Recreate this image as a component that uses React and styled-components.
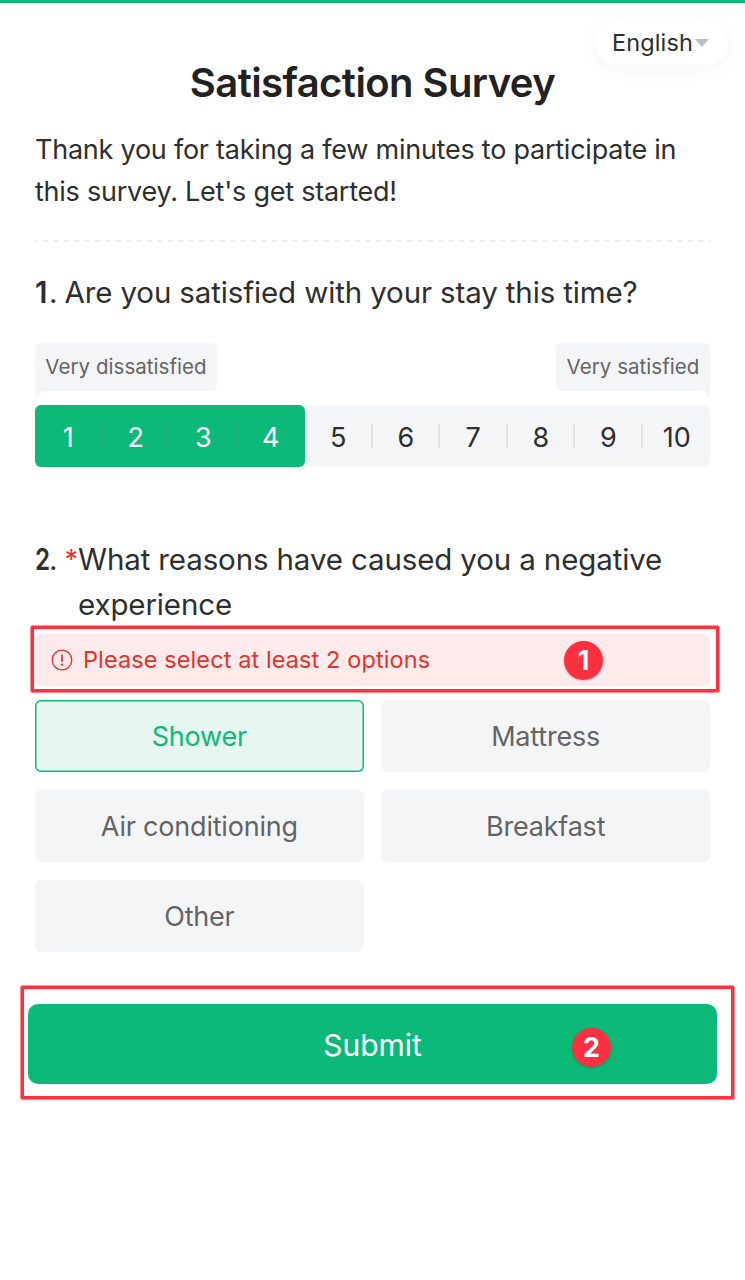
import { useState } from 'react';
import styled, { createGlobalStyle, css } from 'styled-components';

const Color = {
  GREEN: '#0db978',
  GREEN_LIGHT: '#e6f6f0',
  GRAY_LIGHT: '#f4f5f7',
  GRAY_LINE: '#dfe1e3',
  TEXT: '#2e2e2e',
  TEXT_MUTED: '#646464',
  RED: '#e5322d',
  RED_LIGHT: '#fdeaea',
  MARK: '#fb3040'
};

const GlobalStyle = createGlobalStyle`
  *,
  *::before,
  *::after {
    box-sizing: border-box;
  }

  body {
    margin: 0;
    background-color: #ffffff;
    color: ${Color.TEXT};
    font-family: Inter, 'Liberation Sans', sans-serif;
    font-weight: 370;
  }

  button {
    padding: 0;
    border: none;
    font: inherit;
    cursor: pointer;
  }
`;

const Page = styled.div`
  position: relative;
  min-height: 1280px;
  padding: 58px 35px 0;
  border-top: 3px solid ${Color.GREEN};
`;

const Language = styled.button`
  position: absolute;
  top: 17px;
  right: 17px;
  display: flex;
  align-items: center;
  justify-content: center;
  gap: 2px;
  width: 133px;
  height: 45px;
  padding-right: 2px;
  border-radius: 23px;
  background-color: #ffffff;
  box-shadow: 0 4px 18px rgba(0, 30, 20, 0.05);
  color: ${Color.TEXT};
  font-size: 23.5px;
  letter-spacing: 0.1px;
`;

const Caret = styled.span`
  border: 7px solid transparent;
  border-top: 8px solid #b3c2cd;
  border-bottom: none;
`;

const Title = styled.h1`
  margin: 0;
  color: #222222;
  font-size: 40px;
  font-weight: 600;
  line-height: 44px;
  letter-spacing: -0.58px;
  text-align: center;
`;

const Intro = styled.p`
  margin: 24px 0 0;
  font-size: 27px;
  line-height: 41.5px;
  letter-spacing: -0.24px;
  white-space: nowrap;
`;

const Divider = styled.svg`
  display: block;
  width: 676px;
  height: 2px;
  margin-top: 28px;
`;

const Question = styled.h2`
  display: flex;
  margin: ${({ $top }) => $top}px 0 0;
  font-size: 29.5px;
  font-weight: inherit;
  line-height: 45px;
  letter-spacing: -0.13px;
  white-space: nowrap;
`;

const Num = styled.span`
  width: 29.5px;
  flex: none;

  b {
    display: inline-block;
    width: 14px;
    font-weight: 600;
    transform: scaleX(${({ $condense = 1 }) => $condense});
    transform-origin: left;
  }
`;

const Required = styled.span`
  width: 13.5px;
  flex: none;
  color: ${Color.RED};
  font-size: 27px;
`;

const Hints = styled.div`
  display: flex;
  justify-content: space-between;
  margin-top: 28px;
`;

const Hint = styled.span`
  position: relative;
  display: flex;
  align-items: center;
  justify-content: center;
  width: ${({ $width }) => $width}px;
  height: 48px;
  border-radius: 6px;
  background-color: ${Color.GRAY_LIGHT};
  color: ${Color.TEXT_MUTED};
  font-size: 20.5px;
  letter-spacing: 0.05px;
  line-height: 24px;
  white-space: nowrap;

  &::after {
    content: '';
    position: absolute;
    top: 44px;
    ${({ $side }) => $side}: 0;
    width: 12px;
    height: 12px;
    background-color: ${Color.GRAY_LIGHT};
    clip-path: ${({ $side }) =>
      $side === 'left' ? 'polygon(0 0, 100% 0, 0 100%)' : 'polygon(0 0, 100% 0, 100% 100%)'};
  }
`;

const Scale = styled.div`
  display: grid;
  grid-template-columns: repeat(10, 1fr);
  height: 62px;
  margin-top: 14px;
  border-radius: 6px;
  background-color: ${Color.GRAY_LIGHT};
`;

const Score = styled.button`
  display: flex;
  align-items: center;
  background-color: transparent;
  color: ${Color.TEXT};
  font-size: 27px;

  span {
    flex: 1;
    height: 24px;
    padding-left: 1px;
    line-height: 27px;
  }

  &:not(:last-child) span {
    border-right: 2px solid ${Color.GRAY_LINE};
  }

  ${({ $active }) =>
    $active &&
    css`
      background-color: ${Color.GREEN};
      color: #ffffff;

      &:not(:last-child) span {
        border-right-color: #2ba97b;
      }
    `}

  ${({ $last }) =>
    $last &&
    css`
      border-radius: 0 6px 6px 0;

      &:not(:last-child) span {
        border-right-color: transparent;
      }
    `}

  &:first-child {
    border-radius: 6px 0 0 6px;
  }
`;

const Frame = styled.div`
  position: relative;
  border: 3px solid ${Color.MARK};
  border-radius: 1px;
  box-shadow: 0 0 0 0.5px ${Color.MARK}, 0 1px 3px rgba(0, 0, 0, 0.16),
    inset 0 1px 3px rgba(0, 0, 0, 0.1);
`;

const AlertFrame = styled(Frame)`
  height: 66px;
  margin: -1px -9px 0 -4px;
  padding: 5px 6px 0 1px;
`;

const Alert = styled.div`
  display: flex;
  align-items: center;
  gap: 10px;
  height: 52px;
  padding-left: 16px;
  border-radius: 6px;
  background-color: ${Color.RED_LIGHT};
  color: ${Color.RED};
  font-size: 23.5px;
  letter-spacing: 0.1px;
  white-space: nowrap;
`;

const SubmitFrame = styled(Frame)`
  height: 113px;
  margin: 34px -24px 0 -14px;
  padding: 15px 14px 0 4px;
`;

const Marker = styled.span`
  position: absolute;
  top: ${({ $top }) => $top}px;
  left: ${({ $left }) => $left}px;
  display: flex;
  align-items: center;
  justify-content: center;
  width: 39px;
  height: 39px;
  border-radius: 50%;
  background-color: ${Color.MARK};
  box-shadow: 0 1px 3px rgba(0, 0, 0, 0.2);
  color: #ffffff;
  font-size: 27px;
  font-weight: 700;
  line-height: 1;
`;

const Options = styled.div`
  display: grid;
  grid-template-columns: 1fr 1fr;
  grid-auto-rows: 72.5px;
  gap: 17.5px;
  margin-top: 8px;
`;

const Option = styled.button`
  padding-top: 2px;
  border-radius: 6px;
  background-color: ${Color.GRAY_LIGHT};
  color: ${Color.TEXT_MUTED};
  font-size: 27px;
  letter-spacing: -0.2px;

  ${({ $selected }) =>
    $selected &&
    css`
      background-color: ${Color.GREEN_LIGHT};
      box-shadow: inset 0 0 0 1.5px ${Color.GREEN};
      color: ${Color.GREEN};
    `}
`;

const Submit = styled.button`
  display: block;
  width: 100%;
  height: 80px;
  padding-top: 2px;
  border-radius: 10px;
  background-color: ${Color.GREEN};
  color: #ffffff;
  font-size: 30px;
`;

const scores = [1, 2, 3, 4, 5, 6, 7, 8, 9, 10];
const reasons = ['Shower', 'Mattress', 'Air conditioning', 'Breakfast', 'Other'];

function WarningIcon() {
  return (
    <svg width='22' height='22' viewBox='0 0 22 22' fill='none' stroke='currentColor'>
      <circle cx='11' cy='11' r='9.8' strokeWidth='1.3' />
      <path d='M11 5.5v7.2' strokeWidth='1.7' />
      <circle cx='11' cy='15.6' r='1.2' fill='currentColor' stroke='none' />
    </svg>
  );
}

function App() {
  const [score, setScore] = useState(4);
  const [selected, setSelected] = useState(['Shower']);

  const toggle = (reason) =>
    setSelected((prev) =>
      prev.includes(reason) ? prev.filter((item) => item !== reason) : [...prev, reason]
    );

  return (
    <>
      <GlobalStyle />
      <Page>
        <Language>
          English
          <Caret />
        </Language>
        <Title>Satisfaction Survey</Title>
        <Intro>
          Thank you for taking a few minutes to participate in
          <br />
          this survey. Let's get started!
        </Intro>
        <Divider>
          <line x1='0' y1='1' x2='676' y2='1' stroke='#ececec' strokeWidth='2' strokeDasharray='5.2 5.2' strokeDashoffset='2.5' />
        </Divider>

        <Question $top={28}>
          <Num>
            <b>1</b>.
          </Num>
          <span>Are you satisfied with your stay this time?</span>
        </Question>
        <Hints>
          <Hint $side='left' $width={182}>Very dissatisfied</Hint>
          <Hint $side='right' $width={154}>Very satisfied</Hint>
        </Hints>
        <Scale>
          {scores.map((value) => (
            <Score
              key={value}
              $active={value <= score}
              $last={value === score}
              onClick={() => setScore(value)}
            >
              <span>{value}</span>
            </Score>
          ))}
        </Scale>

        <Question $top={69.5}>
          <Num $condense={0.82}>
            <b>2</b>.
          </Num>
          <Required>*</Required>
          <span>
            What reasons have caused you a negative
            <br />
            experience
          </span>
        </Question>
        <AlertFrame>
          <Alert>
            <WarningIcon />
            Please select at least 2 options
          </Alert>
          <Marker $top={12.5} $left={530}>1</Marker>
        </AlertFrame>
        <Options>
          {reasons.map((reason) => (
            <Option key={reason} $selected={selected.includes(reason)} onClick={() => toggle(reason)}>
              {reason}
            </Option>
          ))}
        </Options>
        <SubmitFrame>
          <Submit>Submit</Submit>
          <Marker $top={39} $left={548}>2</Marker>
        </SubmitFrame>
      </Page>
    </>
  );
}

export default App;
